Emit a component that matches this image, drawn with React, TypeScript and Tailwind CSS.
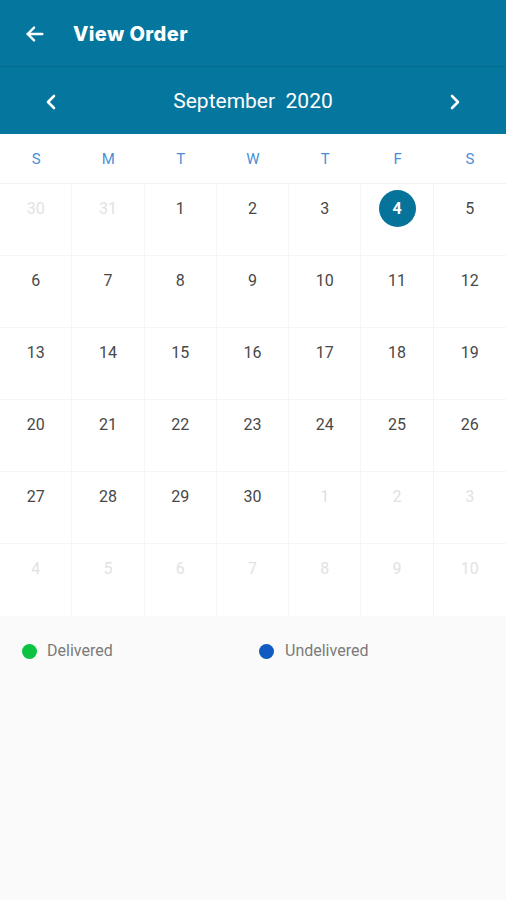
import React from 'react';

const weekDays = ['S', 'M', 'T', 'W', 'T', 'F', 'S'];

interface Day {
  n: number;
  muted: boolean;
}

const buildDays = (): Day[] => {
  const days: Day[] = [{ n: 30, muted: true }, { n: 31, muted: true }];
  for (let i = 1; i <= 30; i++) days.push({ n: i, muted: false });
  let next = 1;
  while (days.length < 42) days.push({ n: next++, muted: true });
  return days;
};

const App: React.FC = () => {
  const days = buildDays();
  const selected = 4;

  return (
    <div className="min-h-[900px] bg-[#fafafa]" style={{ fontFamily: 'Roboto, "Noto Sans", sans-serif' }}>
      {/* app bar */}
      <div className="h-[67px] bg-[#05769e] flex items-center border-b border-[#056b8f]">
        <div className="w-[73px] flex justify-center pr-1 pt-[1px]">
          <svg width="22" height="22" viewBox="0 0 24 24" fill="none" stroke="white" strokeWidth="2.6" strokeLinecap="round" strokeLinejoin="round">
            <path d="M20 12H4" />
            <path d="M11 5l-7 7 7 7" />
          </svg>
        </div>
        <span className="text-white text-[20px] font-extrabold tracking-[0.4px] pt-[1px]" style={{ fontFamily: 'Inter, "Open Sans", sans-serif' }}>
          View Order
        </span>
      </div>

      {/* month selector */}
      <div className="h-[67px] bg-[#05769e] flex items-center justify-between px-[44px] pt-[2px]">
        <svg width="14" height="18" viewBox="0 0 14 18" fill="none" stroke="white" strokeWidth="2.6" strokeLinecap="round" strokeLinejoin="round">
          <path d="M10 3L4 9l6 6" />
        </svg>
        <span className="text-white text-[21px] whitespace-pre">September  2020</span>
        <svg width="14" height="18" viewBox="0 0 14 18" fill="none" stroke="white" strokeWidth="2.6" strokeLinecap="round" strokeLinejoin="round">
          <path d="M4 3l6 6-6 6" />
        </svg>
      </div>

      {/* weekday header */}
      <div className="grid grid-cols-7 h-[50px] bg-white border-b border-[#f2f2f2]">
        {weekDays.map((d, i) => (
          <div key={i} className="flex items-center justify-center pt-[2px] text-[15px] text-[#4a8fd6]">
            {d}
          </div>
        ))}
      </div>

      {/* days grid */}
      <div className="grid grid-cols-7 bg-white">
        {days.map((d, i) => {
          const isSel = !d.muted && d.n === selected;
          return (
            <div
              key={i}
              className={`h-[72px] flex justify-center pt-[6px] border-[#f5f5f5] ${i % 7 !== 6 ? 'border-r' : ''} ${i < 35 ? 'border-b' : ''}`}
            >
              {isSel ? (
                <div className="w-[37px] h-[37px] rounded-full bg-[#05739a] flex items-center justify-center text-white text-[16px] font-bold">
                  {d.n}
                </div>
              ) : (
                <div className={`h-[37px] pt-[1px] flex items-center text-[16px] ${d.muted ? 'text-[#e2e2e2]' : 'text-[#484848]'}`}>
                  {d.n}
                </div>
              )}
            </div>
          );
        })}
      </div>

      {/* legend */}
      <div className="flex items-center h-[70px] pl-[22px]">
        <div className="flex items-center w-[237px]">
          <span className="w-[15px] h-[15px] rounded-full bg-[#0cc241] mr-[10px]" />
          <span className="text-[16px] text-[#7a7a7a]">Delivered</span>
        </div>
        <div className="flex items-center">
          <span className="w-[15px] h-[15px] rounded-full bg-[#0f5bc2] mr-[11px]" />
          <span className="text-[16px] text-[#7a7a7a]">Undelivered</span>
        </div>
      </div>
    </div>
  );
};

export default App;
